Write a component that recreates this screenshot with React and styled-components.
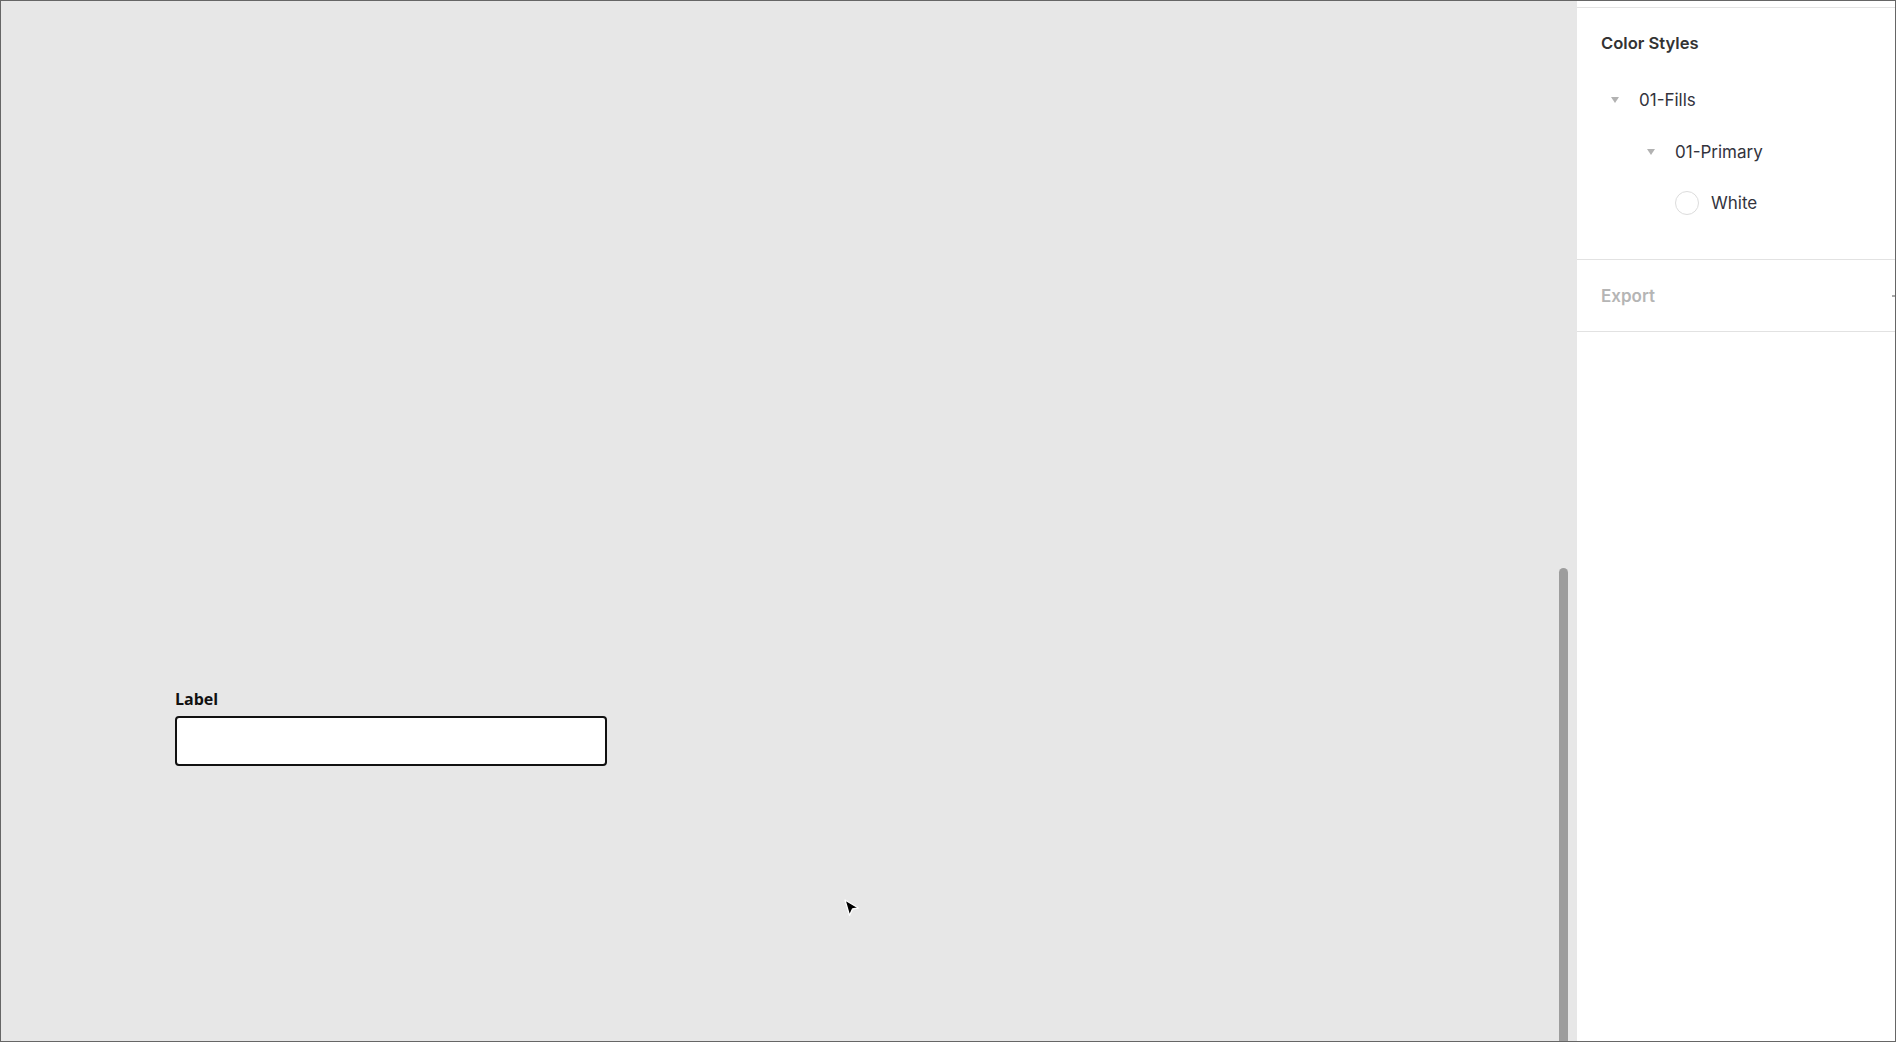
import React from "react";
import styled, { createGlobalStyle } from "styled-components";

const Global = createGlobalStyle`
  html, body { margin: 0; padding: 0; }
  body { width: 1896px; height: 1042px; overflow: hidden; background: #e7e7e7; }
  * { box-sizing: border-box; }
`;

const Frame = styled.div`
  width: 1896px;
  height: 1042px;
  border: 1px solid #666;
  display: flex;
  overflow: hidden;
`;

const Canvas = styled.div`
  position: relative;
  flex: 1;
  background: #e7e7e7;
  padding: 687px 0 0 173px;
`;

const Field = styled.div`
  display: flex;
  flex-direction: column;
  gap: 6px;
  width: 432px;
`;

const FieldLabel = styled.label`
  font-family: "Open Sans", "Noto Sans", sans-serif;
  font-weight: 700;
  font-size: 16px;
  line-height: 22px;
  color: #111;
  padding-left: 1px;
`;

const TextInput = styled.input`
  width: 432px;
  height: 50px;
  border: 2px solid #111;
  border-radius: 4px;
  background: #fff;
  outline: none;
  margin-left: 1px;
  font-family: "Open Sans", sans-serif;
  font-size: 16px;
`;

const ScrollThumb = styled.div`
  position: absolute;
  right: 9px;
  top: 567px;
  bottom: 0;
  width: 9px;
  background: #9d9d9d;
  border-radius: 5px 5px 0 0;
`;

const Cursor = styled.svg`
  position: absolute;
  left: 841px;
  top: 896px;
`;

const Panel = styled.aside`
  width: 318px;
  background: #fff;
  display: flex;
  flex-direction: column;
  font-family: Inter, "Noto Sans", sans-serif;
`;

const TopStrip = styled.div`
  height: 7px;
  border-bottom: 1px solid #e3e3e3;
`;

const Section = styled.section`
  padding: 23px 0 36px 24px;
  border-bottom: 1px solid #e2e2e2;
`;

const Heading = styled.h2`
  margin: 0;
  font-size: 16.6px;
  line-height: 24px;
  font-weight: 600;
  color: #333;
`;

const Tree = styled.ul`
  list-style: none;
  margin: 25px 0 0;
  padding: 0;
  display: flex;
  flex-direction: column;
  gap: 11.5px;
`;

const Row = styled.li`
  height: 40px;
  display: flex;
  align-items: center;
  gap: 12px;
  padding-left: ${(p) => 2 + p.$level * 36}px;
  font-size: 17px;
  color: #33333d;
`;

const Marker = styled.span`
  width: 24px;
  height: 24px;
  display: flex;
  align-items: center;
  justify-content: center;
`;

const Caret = styled.span`
  width: 0;
  height: 0;
  border-left: 4.5px solid transparent;
  border-right: 4.5px solid transparent;
  border-top: 6px solid #b2b2b2;
`;

const Swatch = styled.span`
  width: 24px;
  height: 24px;
  border-radius: 50%;
  border: 1px solid #dcdcdc;
  background: ${(p) => p.$color};
`;

const ExportRow = styled.div`
  height: 72px;
  display: flex;
  align-items: center;
  justify-content: space-between;
  padding-left: 24px;
  padding-top: 1px;
  border-bottom: 1px solid #e2e2e2;
`;

const ExportTitle = styled.span`
  font-size: 17px;
  font-weight: 600;
  color: #b5b5b5;
`;

const AddTick = styled.span`
  width: 3px;
  height: 2px;
  background: #a8a8a8;
`;

const items = [
  { level: 0, kind: "group", name: "01-Fills" },
  { level: 1, kind: "group", name: "01-Primary" },
  { level: 2, kind: "color", name: "White", color: "#ffffff" },
];

export default function App() {
  return (
    <>
      <Global />
      <Frame>
        <Canvas>
          <Field>
            <FieldLabel htmlFor="lbl">Label</FieldLabel>
            <TextInput id="lbl" />
          </Field>
          <ScrollThumb />
          <Cursor width="20" height="22" viewBox="0 0 20 22">
            <path
              d="M3 3 L16.5 11 L10.5 12 L7.5 18.5 Z"
              fill="#000"
              stroke="#fff"
              strokeWidth="1.3"
              strokeLinejoin="round"
            />
          </Cursor>
        </Canvas>
        <Panel>
          <TopStrip />
          <Section>
            <Heading>Color Styles</Heading>
            <Tree>
              {items.map((it) => (
                <Row key={it.name} $level={it.level}>
                  <Marker>
                    {it.kind === "group" ? <Caret /> : <Swatch $color={it.color} />}
                  </Marker>
                  {it.name}
                </Row>
              ))}
            </Tree>
          </Section>
          <ExportRow>
            <ExportTitle>Export</ExportTitle>
            <AddTick />
          </ExportRow>
        </Panel>
      </Frame>
    </>
  );
}
